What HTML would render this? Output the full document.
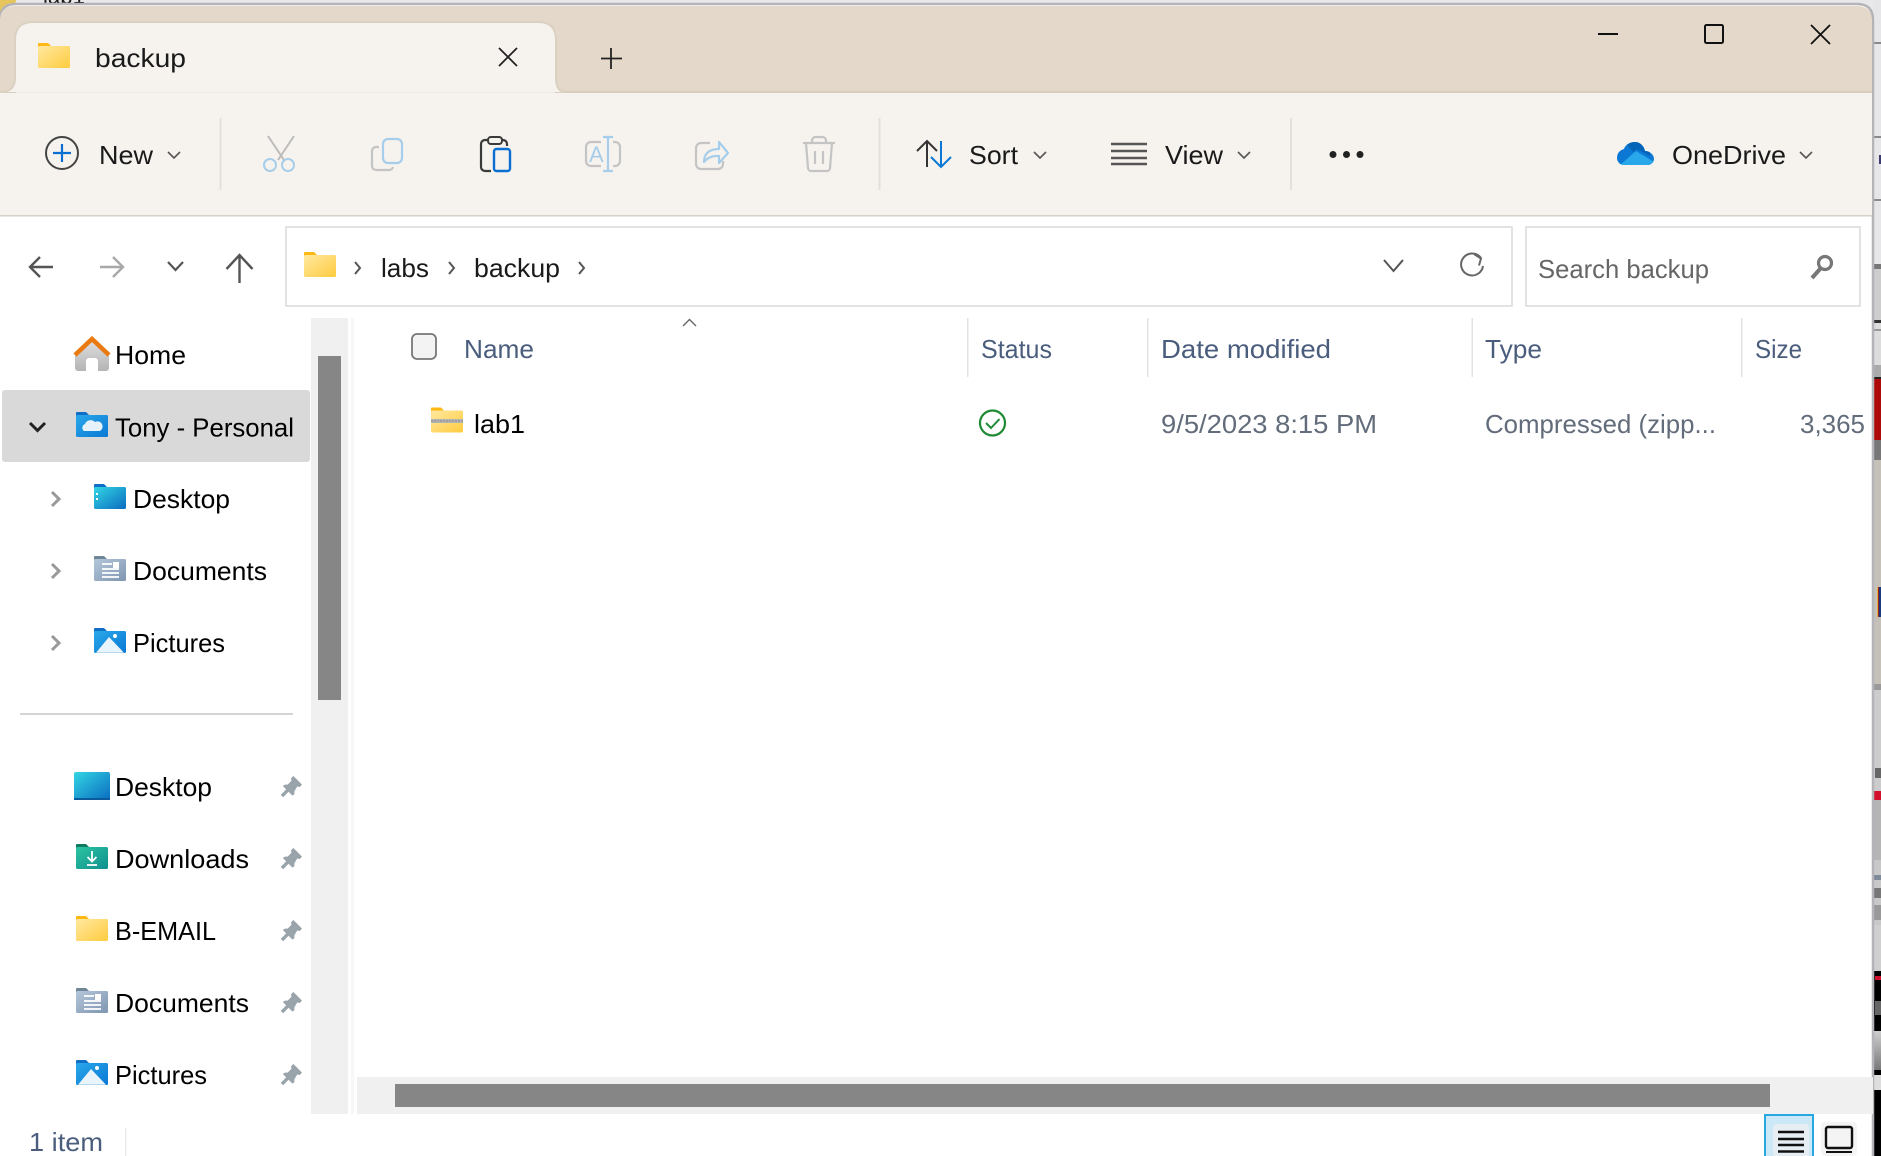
<!DOCTYPE html>
<html><head><meta charset="utf-8"><title>backup</title>
<style>
html,body{margin:0;padding:0;background:#fff;width:1881px;height:1156px;overflow:hidden}
svg{display:block}
text{font-family:"Liberation Sans",sans-serif;font-size:26px}
.t{fill:#1a1a1a}.n{fill:#000}.h{fill:#4a5d7c}.d{fill:#626c7a}
</style></head><body>
<svg xmlns="http://www.w3.org/2000/svg" width="1881" height="1156" viewBox="0 0 1881 1156">
<defs>
<linearGradient id="fy" x1="0" y1="0" x2="1" y2="1"><stop offset="0" stop-color="#ffe8a0"/><stop offset="1" stop-color="#ffcc40"/></linearGradient>
<linearGradient id="fb" x1="0" y1="0" x2="1" y2="1"><stop offset="0" stop-color="#2aa8ea"/><stop offset="1" stop-color="#0a78d4"/></linearGradient>
<linearGradient id="fd" x1="0" y1="0" x2="1" y2="1"><stop offset="0" stop-color="#33d6e4"/><stop offset="1" stop-color="#0a6cc0"/></linearGradient>
<linearGradient id="fg" x1="0" y1="0" x2="1" y2="1"><stop offset="0" stop-color="#b4c6da"/><stop offset="1" stop-color="#7e96b0"/></linearGradient>
<linearGradient id="fe" x1="0" y1="0" x2="1" y2="1"><stop offset="0" stop-color="#2cc4a0"/><stop offset="1" stop-color="#0f8f90"/></linearGradient>
<linearGradient id="hm" x1="0" y1="0" x2="0" y2="1"><stop offset="0" stop-color="#e2e2e2"/><stop offset="1" stop-color="#b4b4b4"/></linearGradient>
<linearGradient id="st" x1="0" y1="0" x2="0" y2="1"><stop offset="0" stop-color="#cfcfcf"/><stop offset="1" stop-color="#777"/></linearGradient>
<clipPath id="od"><path d="M1624 165a7 7 0 0 1-7-7c0-5 3-8 7-9c1-4 6-7 11-7c5 0 9 4 10 9c5 0 9 4 9 8c0 3-3 6-6 6z"/></clipPath>
<symbol id="yf" viewBox="0 0 32 25"><path d="M1 0h9l3 3v4H0V1a1 1 0 0 1 1-1z" fill="#fdb813"/><rect y="3" width="32" height="22" rx="1.5" fill="url(#fy)"/></symbol>
<symbol id="bf" viewBox="0 0 32 25"><path d="M1 0h9l3 3v4H0V1a1 1 0 0 1 1-1z" fill="#0f6fc6"/><rect y="3" width="32" height="22" rx="1.5" fill="url(#fb)"/></symbol>
<symbol id="df" viewBox="0 0 32 25"><path d="M1 0h9l3 3v4H0V1a1 1 0 0 1 1-1z" fill="#0f6fc6"/><rect y="3" width="32" height="22" rx="1.5" fill="url(#fd)"/><rect x="2" y="9" width="2" height="2" fill="#fff"/><rect x="2" y="14" width="2" height="2" fill="#fff"/></symbol>
<symbol id="gf" viewBox="0 0 32 25"><path d="M1 0h9l3 3v4H0V1a1 1 0 0 1 1-1z" fill="#6f8696"/><rect y="3" width="32" height="22" rx="1.5" fill="url(#fg)"/><path d="M8 8h10M8 13h17M8 17h17M8 21h17" stroke="#fff" stroke-width="1.8"/><rect x="19" y="6" width="6" height="6" fill="#fff"/></symbol>
<symbol id="pf" viewBox="0 0 32 25"><path d="M1 0h9l3 3v4H0V1a1 1 0 0 1 1-1z" fill="#0f6fc6"/><rect y="3" width="32" height="22" rx="1.5" fill="url(#fb)"/><path d="M2 24.800L15 9l15 15.800z" fill="#eaf4fc"/><circle cx="21" cy="8" r="2" fill="#fff"/></symbol>
<symbol id="pin" viewBox="0 0 24 24"><path d="M14 1L23 10L20.500 12.500L18 12L15 17V20L13 21.500L3 11.500L5 10L8 10L12 6L11.500 3.500z" fill="#99a3aa"/><path d="M8.500 15.500L2 22" stroke="#99a3aa" stroke-width="3.500"/></symbol>
</defs>

<!-- backdrop behind window -->
<rect width="1881" height="1156" fill="#e8e8ea"/>
<path d="M0 0h16c0 6-8 10-16 12z" fill="#e6c65c"/>
<text x="43" y="4" class="t" textLength="42" lengthAdjust="spacingAndGlyphs">lab1</text>
<rect x="1873" y="0" width="8" height="1156" fill="#e6e6e8"/>
<rect x="1873" y="42" width="8" height="2" fill="#8a8a8a"/>
<rect x="1873" y="136" width="8" height="2" fill="#8a8a8a"/>
<rect x="1879" y="155" width="2" height="9" fill="#3b3b70"/>
<rect x="1873" y="199" width="8" height="2" fill="#8a8a8a"/>
<rect x="1873" y="264" width="8" height="5" fill="#777"/>
<rect x="1873" y="269" width="8" height="51" fill="#cdcdcd"/>
<rect x="1873" y="320" width="8" height="3" fill="#333"/>
<rect x="1873" y="323" width="8" height="42" fill="#dcdcdc"/>
<rect x="1873" y="329" width="8" height="2" fill="#999"/>
<rect x="1873" y="365" width="8" height="14" fill="#aaa"/>
<rect x="1873" y="377" width="8" height="2" fill="#222"/>
<rect x="1873" y="379" width="8" height="61" fill="#ae0a0a"/>
<rect x="1873" y="440" width="8" height="20" fill="#777"/>
<rect x="1873" y="460" width="8" height="224" fill="#c5c1b8"/>
<rect x="1877" y="587" width="1" height="30" fill="#e0b040"/>
<rect x="1878" y="587" width="1" height="30" fill="#a02020"/>
<rect x="1879" y="587" width="2" height="30" fill="#1a3a80"/>
<rect x="1873" y="684" width="8" height="6" fill="#999"/>
<rect x="1873" y="690" width="8" height="101" fill="#cccccc"/>
<rect x="1875" y="768" width="6" height="10" fill="#666"/>
<rect x="1873" y="791" width="8" height="9" fill="#d2102c"/>
<rect x="1873" y="800" width="8" height="60" fill="#b5b5b5"/>
<rect x="1873" y="860" width="8" height="65" fill="#c8c8c8"/>
<rect x="1873" y="875" width="8" height="5" fill="#7f8a99"/>
<rect x="1873" y="888" width="8" height="10" fill="#777"/>
<rect x="1873" y="905" width="8" height="15" fill="#999"/>
<rect x="1873" y="925" width="8" height="46" fill="#cfcfcf"/>
<rect x="1873" y="971" width="8" height="60" fill="#000"/>
<rect x="1875" y="976" width="6" height="4" fill="#d0102c"/>
<rect x="1875" y="1001" width="6" height="14" fill="#666"/>
<rect x="1873" y="1031" width="8" height="39" fill="url(#st)"/>
<rect x="1873" y="1070" width="8" height="5" fill="#000"/>
<rect x="1873" y="1075" width="8" height="15" fill="#ddd"/>
<rect x="1873" y="1090" width="8" height="66" fill="#000"/>
<rect x="1871" y="1150" width="2" height="6" fill="#000"/>

<!-- window -->
<path d="M0 20Q0 4 16 4H1857Q1873 4 1873 20V1156H0z" fill="#fff"/>
<path d="M0 20Q0 4 16 4H1857Q1873 4 1873 20V1156" fill="none" stroke="#b4b4b8" stroke-width="2.500"/>
<path d="M0 21Q0 6 15 6H1857Q1872 6 1872 21V93H0z" fill="#e3d8ca"/>
<rect x="0" y="91" width="1872" height="2" fill="#d9cdbd"/>
<rect x="0" y="93" width="1872" height="122" fill="#f6f3ee"/>
<rect x="0" y="215" width="1872" height="1.500" fill="#d6d1c7"/>
<path d="M0 92Q15 92 15 78V40Q15 22 33 22H538Q556 22 556 40V78Q556 92 566 92" fill="#f6f3ee" stroke="#dbd1c3" stroke-width="2"/>
<rect x="16" y="90" width="539" height="4" fill="#f6f3ee"/>
<rect x="16" y="92" width="539" height="1" fill="#ede9e2"/>

<!-- tab -->
<use href="#yf" x="38" y="43" width="32" height="25"/>
<text x="95" y="67" class="t" textLength="91" lengthAdjust="spacingAndGlyphs">backup</text>
<path d="M499 48L517 66M517 48L499 66" stroke="#222" stroke-width="1.800" fill="none"/>
<path d="M611 48V69M601 58.500H622" stroke="#222" stroke-width="1.800" fill="none"/>

<!-- window controls -->
<path d="M1598 34H1618" stroke="#111" stroke-width="2"/>
<rect x="1705" y="25" width="18" height="18" rx="1.500" fill="none" stroke="#111" stroke-width="2"/>
<path d="M1811 25L1830 44M1830 25L1811 44" stroke="#111" stroke-width="1.800"/>

<!-- toolbar -->
<circle cx="62" cy="153" r="16" fill="none" stroke="#444" stroke-width="2"/>
<path d="M62 144V162M53 153H71" stroke="#0a6fd0" stroke-width="2.200"/>
<text x="99" y="164" class="t" textLength="54" lengthAdjust="spacingAndGlyphs">New</text>
<path d="M168 152l6 6 6-6" fill="none" stroke="#555" stroke-width="1.600"/>
<rect x="219.500" y="118" width="2" height="72" fill="#e3e0da"/>

<!-- cut -->
<path d="M268 136L284 160M294 136L278 160" stroke="#bcbcbc" stroke-width="2" fill="none"/>
<circle cx="270" cy="165" r="6" fill="none" stroke="#a6cdea" stroke-width="2"/>
<circle cx="288" cy="165" r="6" fill="none" stroke="#a6cdea" stroke-width="2"/>
<!-- copy -->
<path d="M379 147h-3a4 4 0 0 0-4 4v15a4 4 0 0 0 4 4h13a4 4 0 0 0 4-3" fill="none" stroke="#c4c4c4" stroke-width="2.200"/>
<rect x="383" y="139" width="19" height="24" rx="5" fill="none" stroke="#a6cdea" stroke-width="2.200"/>
<!-- paste -->
<path d="M491 171h-6a4 4 0 0 1-4-4v-23a4 4 0 0 1 4-4h3M502 140h1a4 4 0 0 1 4 4v2" fill="none" stroke="#3a3a3a" stroke-width="2.200"/>
<rect x="488" y="137" width="14" height="7" rx="3" fill="#f6f3ee" stroke="#3a3a3a" stroke-width="2"/>
<rect x="494" y="149" width="16" height="22" rx="2.500" fill="none" stroke="#0a6fd0" stroke-width="2.400"/>
<!-- rename -->
<path d="M601 142h-10a5 5 0 0 0-5 5v14a5 5 0 0 0 5 5h10M613 142h2a5 5 0 0 1 5 5v14a5 5 0 0 1-5 5h-2" fill="none" stroke="#c4c4c4" stroke-width="2.200"/>
<path d="M608 137V171M603 137H613M603 171H613" stroke="#a6cdea" stroke-width="2.200" fill="none"/>
<text x="589" y="162" style="font-size:22px;fill:#a6cdea">A</text>
<!-- share -->
<path d="M710 143h-9a5 5 0 0 0-5 5v16a5 5 0 0 0 5 5h17a5 5 0 0 0 5-5v-3" fill="none" stroke="#c4c4c4" stroke-width="2.200"/>
<path d="M704 162c0-9 6-13 15-13v-7l9 11-9 10v-7c-6-.500-11 1-15 6z" fill="none" stroke="#a6cdea" stroke-width="2.200" stroke-linejoin="round"/>
<!-- delete -->
<path d="M803 143H835M812 143v-3a4 4 0 0 1 4-3h6a4 4 0 0 1 4 3v3M806 143l2 25a3 3 0 0 0 3 3h16a3 3 0 0 0 3-3l2-25M815 151v13M823 151v13" fill="none" stroke="#c4c4c4" stroke-width="2.200"/>
<rect x="878.500" y="118" width="2" height="72" fill="#e3e0da"/>

<!-- sort -->
<path d="M927 167V141M917 151L927 141L937 151" fill="none" stroke="#333" stroke-width="2"/>
<path d="M941 141V167M931 157L941 167L951 157" fill="none" stroke="#0a78d4" stroke-width="2"/>
<text x="969" y="164" class="t" textLength="49" lengthAdjust="spacingAndGlyphs">Sort</text>
<path d="M1034 152l6 6 6-6" fill="none" stroke="#555" stroke-width="1.600"/>
<!-- view -->
<path d="M1111 144H1147M1111 151H1147M1111 158H1147M1111 164H1147" stroke="#555" stroke-width="2.400"/>
<text x="1165" y="164" class="t" textLength="58" lengthAdjust="spacingAndGlyphs">View</text>
<path d="M1238 152l6 6 6-6" fill="none" stroke="#555" stroke-width="1.600"/>
<rect x="1290" y="118" width="2" height="72" fill="#e3e0da"/>
<circle cx="1333" cy="154.500" r="3.500" fill="#222"/><circle cx="1346.500" cy="154.500" r="3.500" fill="#222"/><circle cx="1360" cy="154.500" r="3.500" fill="#222"/>
<!-- onedrive -->
<g clip-path="url(#od)">
<rect x="1617" y="142" width="37" height="23" fill="#0a78d4"/>
<path d="M1625 142H1650V156L1637 149L1633 152z" fill="#0364b8"/>
<path d="M1620 165L1636 151L1656 163V165z" fill="#28a8ea"/>
</g>
<text x="1672" y="164" class="t" textLength="114" lengthAdjust="spacingAndGlyphs">OneDrive</text>
<path d="M1800 152l6 6 6-6" fill="none" stroke="#555" stroke-width="1.600"/>

<!-- nav -->
<path d="M30 267H53M40 257L30 267L40 277" fill="none" stroke="#555" stroke-width="2.400"/>
<path d="M100 267H123M113 257L123 267L113 277" fill="none" stroke="#a8a8a8" stroke-width="2.400"/>
<path d="M168 262l7.500 8 7.500-8" fill="none" stroke="#555" stroke-width="2.200"/>
<path d="M239.500 283V255M226.500 269L239.500 255L252.500 269" fill="none" stroke="#555" stroke-width="2.400"/>

<!-- address -->
<rect x="286" y="227" width="1226" height="79" fill="#fff" stroke="#dcdcdc" stroke-width="1.600"/>
<use href="#yf" x="304" y="252" width="32" height="25"/>
<path d="M355 262l5 6-5 6" fill="none" stroke="#555" stroke-width="2"/>
<text x="381" y="277" class="t" textLength="48" lengthAdjust="spacingAndGlyphs">labs</text>
<path d="M449 262l5 6-5 6" fill="none" stroke="#555" stroke-width="2"/>
<text x="474" y="277" class="t" textLength="86" lengthAdjust="spacingAndGlyphs">backup</text>
<path d="M579 262l5 6-5 6" fill="none" stroke="#555" stroke-width="2"/>
<path d="M1384 260l9.500 11 9.500-11" fill="none" stroke="#555" stroke-width="2"/>
<path d="M1481 258a11 11 0 1 0 2 8M1474 254l7 4.500-2 7" fill="none" stroke="#666" stroke-width="2"/>
<rect x="1526" y="227" width="334" height="79" fill="#fff" stroke="#dcdcdc" stroke-width="1.600"/>
<text x="1538" y="278" fill="#666" textLength="171" lengthAdjust="spacingAndGlyphs">Search backup</text>
<circle cx="1825" cy="263" r="6.500" fill="none" stroke="#777" stroke-width="3.200"/>
<path d="M1820 269L1812 278" stroke="#777" stroke-width="4"/>

<!-- sidebar -->
<rect x="2" y="390" width="308" height="72" rx="3" fill="#d9d9d9"/>
<rect x="311" y="318" width="37" height="796" fill="#f0f0f0"/>
<rect x="318" y="356" width="23" height="344" fill="#868686"/>
<rect x="351" y="318" width="3" height="796" fill="#f7f7f7"/>
<rect x="20" y="713" width="273" height="2" fill="#d5d5d5"/>

<path d="M78 371a3 3 0 0 1-3-3v-16l17-14 17 14v16a3 3 0 0 1-3 3h-8v-10a3 3 0 0 0-3-3h-6a3 3 0 0 0-3 3v10z" fill="url(#hm)"/>
<path d="M75 355L92 339L109 355" fill="none" stroke="#ea7a10" stroke-width="4.500"/>
<text x="115" y="364" class="n" textLength="71" lengthAdjust="spacingAndGlyphs">Home</text>

<path d="M30 423l7.500 7.500 7.500-7.500" fill="none" stroke="#222" stroke-width="3"/>
<use href="#bf" x="76" y="412" width="32" height="25"/>
<path d="M84 431a4 4 0 0 1 1-7 6 6 0 0 1 10-2 5 5 0 0 1 5 9z" fill="#e6f2fb"/>
<text x="115" y="436.500" class="n" textLength="179" lengthAdjust="spacingAndGlyphs">Tony - Personal</text>

<path d="M52 492l7 7-7 7" fill="none" stroke="#999" stroke-width="3"/>
<use href="#df" x="94" y="484" width="32" height="25"/>
<text x="133" y="508" class="n" textLength="97" lengthAdjust="spacingAndGlyphs">Desktop</text>
<path d="M52 564l7 7-7 7" fill="none" stroke="#999" stroke-width="3"/>
<use href="#gf" x="94" y="556" width="32" height="25"/>
<text x="133" y="580" class="n" textLength="134" lengthAdjust="spacingAndGlyphs">Documents</text>
<path d="M52 636l7 7-7 7" fill="none" stroke="#999" stroke-width="3"/>
<use href="#pf" x="94" y="628" width="32" height="25"/>
<text x="133" y="652" class="n" textLength="92" lengthAdjust="spacingAndGlyphs">Pictures</text>

<rect x="74" y="772" width="36" height="28" rx="2" fill="url(#fd)"/>
<rect x="74" y="798" width="36" height="2" fill="#0a5a9c"/>
<text x="115" y="796" class="n" textLength="97" lengthAdjust="spacingAndGlyphs">Desktop</text>
<use href="#pin" x="280" y="775" width="23" height="23"/>

<path d="M77 844h9l3 3v4H76v-6a1 1 0 0 1 1-1z" fill="#0f7a62"/>
<rect x="76" y="847" width="32" height="22" rx="1.500" fill="url(#fe)"/>
<path d="M92 851v10M87.500 857l4.500 4.500 4.500-4.500M87 865H97" fill="none" stroke="#fff" stroke-width="1.800"/>
<text x="115" y="868" class="n" textLength="134" lengthAdjust="spacingAndGlyphs">Downloads</text>
<use href="#pin" x="280" y="847" width="23" height="23"/>

<use href="#yf" x="76" y="916" width="32" height="25"/>
<text x="115" y="940" class="n" textLength="101" lengthAdjust="spacingAndGlyphs">B-EMAIL</text>
<use href="#pin" x="280" y="919" width="23" height="23"/>

<use href="#gf" x="76" y="988" width="32" height="25"/>
<text x="115" y="1012" class="n" textLength="134" lengthAdjust="spacingAndGlyphs">Documents</text>
<use href="#pin" x="280" y="991" width="23" height="23"/>

<use href="#pf" x="76" y="1060" width="32" height="25"/>
<text x="115" y="1084" class="n" textLength="92" lengthAdjust="spacingAndGlyphs">Pictures</text>
<use href="#pin" x="280" y="1063" width="23" height="23"/>

<text x="29" y="1151" class="h" textLength="74" lengthAdjust="spacingAndGlyphs">1 item</text>
<rect x="125" y="1128" width="1.500" height="28" fill="#ececec"/>

<!-- list header -->
<rect x="412" y="334" width="24" height="25" rx="5" fill="#f3f3f3" stroke="#777" stroke-width="1.800"/>
<path d="M683 326l6.500-6.500 6.500 6.500" fill="none" stroke="#666" stroke-width="1.400"/>
<text x="464" y="358" class="h" textLength="70" lengthAdjust="spacingAndGlyphs">Name</text>
<rect x="967" y="318" width="1.500" height="59" fill="#e3e3e3"/>
<text x="981" y="358" class="h" textLength="71" lengthAdjust="spacingAndGlyphs">Status</text>
<rect x="1147" y="318" width="1.500" height="59" fill="#e3e3e3"/>
<text x="1161" y="358" class="h" textLength="170" lengthAdjust="spacingAndGlyphs">Date modified</text>
<rect x="1471.500" y="318" width="1.500" height="59" fill="#e3e3e3"/>
<text x="1485" y="358" class="h" textLength="57" lengthAdjust="spacingAndGlyphs">Type</text>
<rect x="1741" y="318" width="1.500" height="59" fill="#e3e3e3"/>
<text x="1755" y="358" class="h" textLength="47" lengthAdjust="spacingAndGlyphs">Size</text>

<!-- row -->
<use href="#yf" x="431" y="407" width="32" height="26"/>
<rect x="431" y="419" width="32" height="4" fill="#b4b4b4"/>
<path d="M431 421H463" stroke="#8c8c8c" stroke-width="1" stroke-dasharray="2 1"/>
<text x="474" y="433" class="n" textLength="51" lengthAdjust="spacingAndGlyphs">lab1</text>
<circle cx="992.500" cy="423" r="12.500" fill="none" stroke="#1e8a34" stroke-width="2.200"/>
<path d="M986 423l5 5 8.500-9" fill="none" stroke="#1e8a34" stroke-width="2"/>
<text x="1161" y="433" class="d" textLength="216" lengthAdjust="spacingAndGlyphs">9/5/2023 8:15 PM</text>
<text x="1485" y="433" class="d" textLength="231" lengthAdjust="spacingAndGlyphs">Compressed (zipp...</text>
<text x="1800" y="433" class="d" textLength="65" lengthAdjust="spacingAndGlyphs">3,365</text>

<!-- h scroll -->
<rect x="357" y="1077" width="1516" height="37" fill="#f0f0f0"/>
<rect x="395" y="1084" width="1375" height="23" fill="#868686"/>

<!-- view buttons -->
<rect x="1765" y="1115" width="48" height="42" fill="#cce8f6" stroke="#29a7e0" stroke-width="2"/>
<rect x="1773" y="1124" width="36" height="34" rx="4" fill="#e6eef4"/>
<path d="M1778 1132H1804M1778 1139H1804M1778 1145H1804M1778 1151.500H1804" stroke="#111" stroke-width="2.400"/>
<rect x="1821" y="1122" width="36" height="34" rx="4" fill="#f4f4f4"/>
<rect x="1826" y="1127" width="26" height="21" rx="2" fill="none" stroke="#111" stroke-width="2.400"/>
<path d="M1826 1152H1852" stroke="#111" stroke-width="2"/>
</svg>
</body></html>
